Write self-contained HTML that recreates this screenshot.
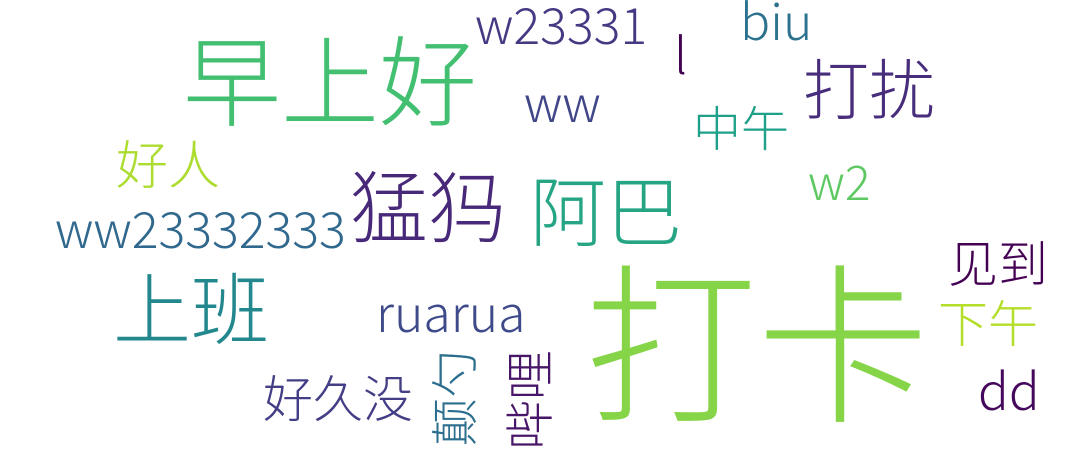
<!DOCTYPE html>
<html><head><meta charset="utf-8"><style>
html,body{margin:0;padding:0;background:#fff;}
body{width:1080px;height:463px;position:relative;overflow:hidden;}
.w{position:absolute;line-height:1;white-space:nowrap;font-family:"Noto Sans CJK SC","WenQuanYi Zen Hei",sans-serif;font-weight:300;}
.c{font-family:"Noto Sans CJK SC","WenQuanYi Zen Hei",sans-serif;font-weight:300;}
.r{position:absolute;line-height:1;white-space:nowrap;font-family:"Noto Sans CJK SC",sans-serif;font-weight:300;transform:translate(-50%,-50%) rotate(-90deg);}
</style></head><body>
<div class="w c" style="left:183px;top:27px;font-size:98px;color:#43bf71">早上好</div>
<div class="w c" style="left:585px;top:248px;font-size:172px;color:#86d549">打卡</div>
<div class="w c" style="left:350px;top:164px;font-size:78px;color:#482878">猛犸</div>
<div class="w c" style="left:530px;top:169px;font-size:76px;color:#25a584">阿巴</div>
<div class="w c" style="left:113px;top:266px;font-size:78px;color:#23888e">上班</div>
<div class="w c" style="left:803px;top:53px;font-size:66px;color:#472d7b">打扰</div>
<div class="w c" style="left:693px;top:101px;font-size:48px;color:#1fa088">中午</div>
<div class="w c" style="left:116px;top:136px;font-size:52px;color:#addc30">好人</div>
<div class="w c" style="left:948px;top:236px;font-size:50px;color:#440154">见到</div>
<div class="w c" style="left:938px;top:296px;font-size:50px;color:#b5de2b">下午</div>
<div class="w c" style="left:263px;top:371px;font-size:50px;color:#433e85">好久没</div>
<div class="w" style="left:475px;top:-2px;font-size:50px;color:#443a83">w23331</div>
<div class="w" style="left:740px;top:-6px;font-size:50px;color:#2c728e">biu</div>
<div class="w" style="left:524px;top:76px;font-size:50px;color:#404688">ww</div>
<div class="w" style="left:808px;top:155px;font-size:48px;color:#5ec962">w2</div>
<div class="w" style="left:55px;top:202px;font-size:50px;color:#31688e">ww23332333</div>
<div class="w" style="left:376px;top:286px;font-size:50px;color:#3e4a89">ruarua</div>
<div class="w" style="left:978px;top:363px;font-size:51px;color:#46085c">dd</div>
<div class="w" style="left:674px;top:28px;font-size:50px;color:#440154">l</div>
<div class="r" style="left:451px;top:398px;font-size:48px;color:#2c6e8e">颠勺</div>
<div class="r" style="left:527px;top:400px;font-size:50px;color:#481668">哔哩</div>
</body></html>
